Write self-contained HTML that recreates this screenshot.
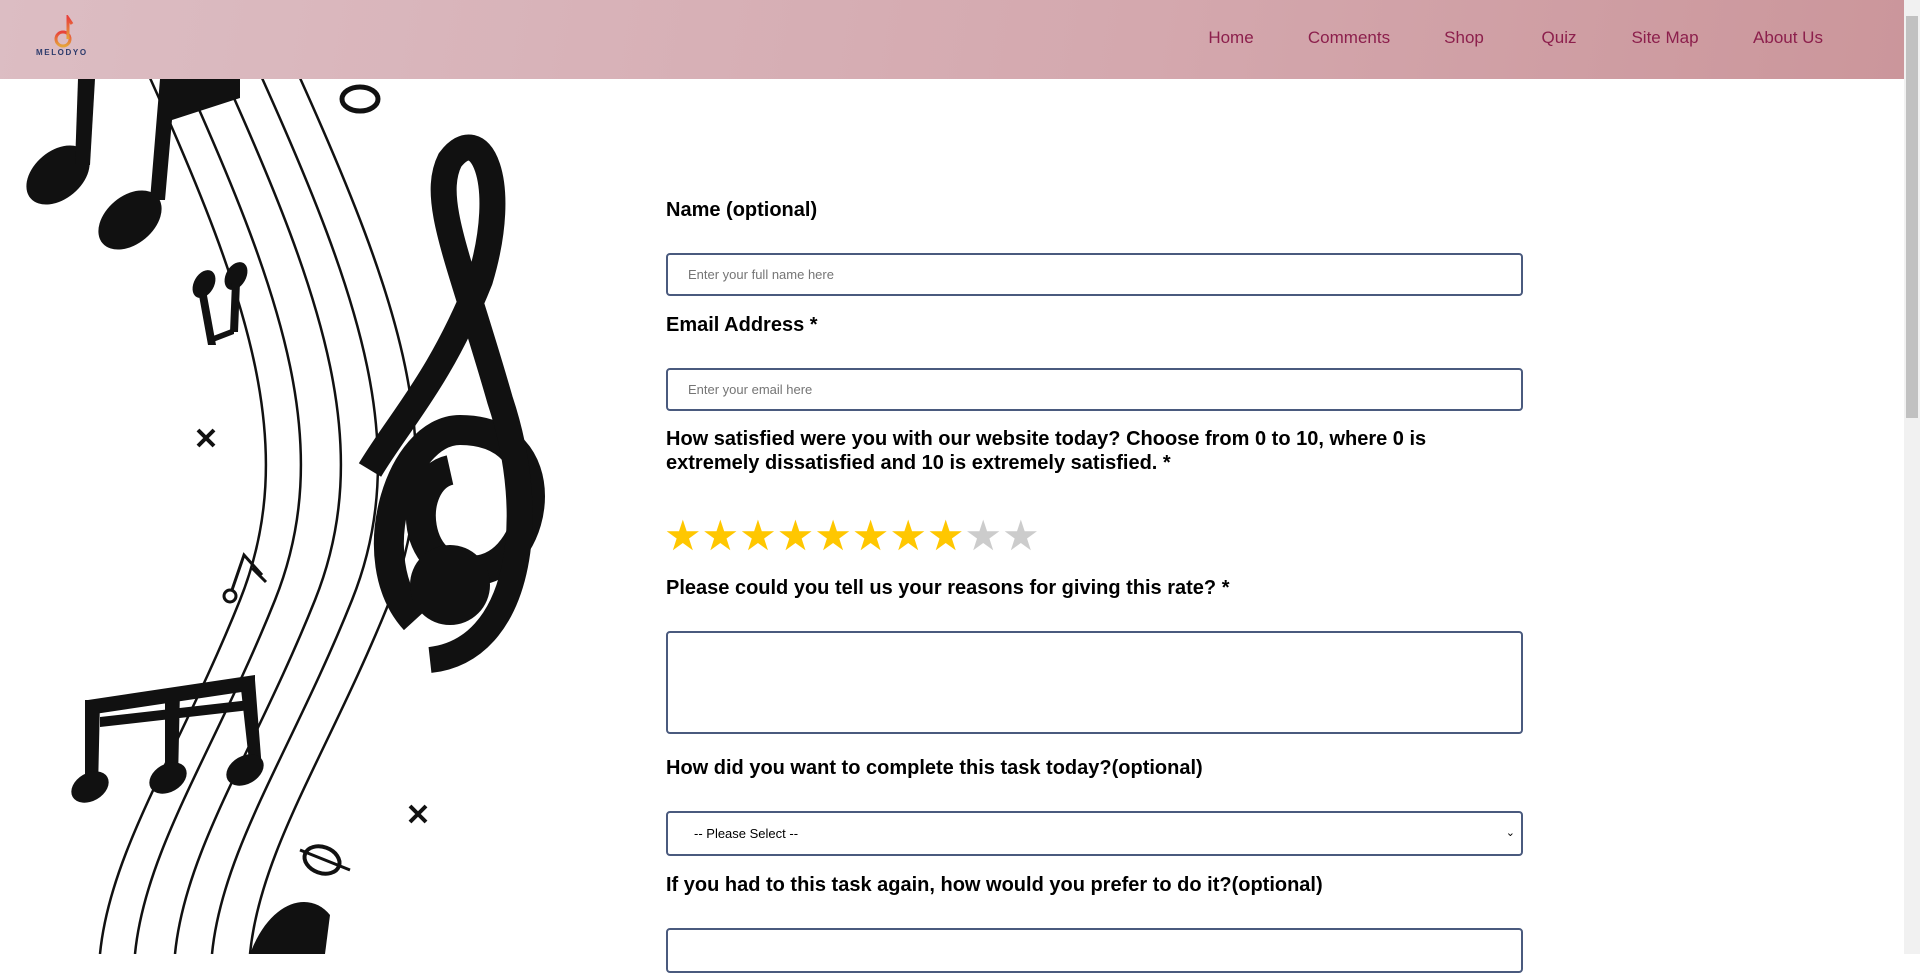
<!DOCTYPE html>
<html><head><meta charset="utf-8"><style>
*{box-sizing:border-box}
html,body{margin:0;padding:0;width:1920px;height:954px;overflow:hidden;background:#fff;font-family:"Liberation Sans",Arial,sans-serif}
header{position:absolute;left:0;top:0;width:1904px;height:79px;background:linear-gradient(100deg,#dcbdc3 0%,#d4a8ae 60%,#cb969b 100%)}
nav a{position:absolute;top:28px;font-size:17px;color:#8c1f4c;text-decoration:none;transform:translateX(-50%)}
.logo{position:absolute;left:36px;top:15px}
.sb{position:absolute;right:0;top:0;width:16px;height:954px;background:#f1f1f1}
.sb div{position:absolute;left:2px;top:16px;width:12px;height:402px;background:#c1c1c1}
label{position:absolute;left:666px;font-weight:bold;font-size:20px;color:#000;line-height:24px}
.in{position:absolute;left:666px;width:857px;border:2px solid #4a5a7e;border-radius:4px;background:#fff;font-size:13px;color:#757575;padding-left:20px}
.stars{position:absolute;left:664px;top:514px;font-size:42px;letter-spacing:-0.1px;line-height:44px;font-family:"DejaVu Sans",sans-serif}
</style></head><body>
<svg width="620" height="954" style="position:absolute;left:0;top:0" viewBox="0 0 620 954">
<g fill="none" stroke="#111" stroke-width="2.5">
<path d="M150 78 C250 300 300 450 240 600 S110 850 100 954"/>
<path d="M185 78 C285 300 335 450 275 600 S145 850 135 954"/>
<path d="M225 78 C325 300 375 450 315 600 S185 850 175 954"/>
<path d="M262 78 C362 300 412 450 352 600 S222 850 212 954"/>
<path d="M300 78 C400 300 450 450 390 600 S260 850 250 954"/>
</g>
<g fill="#111">
<ellipse cx="58" cy="175" rx="36" ry="24" transform="rotate(-40 58 175)"/>
<ellipse cx="130" cy="220" rx="36" ry="24" transform="rotate(-40 130 220)"/>
<path d="M78 79 L95 79 L90 165 L75 165Z"/>
<path d="M160 79 L240 79 L240 98 L172 120 L165 200 L150 200 Z"/>
<ellipse cx="204" cy="284" rx="10" ry="15" transform="rotate(30 204 284)"/>
<ellipse cx="236" cy="276" rx="10" ry="15" transform="rotate(30 236 276)"/>
<path d="M198 290 h8 l10 55 h-8Z M232 282 h8 l-2 50 h-8Z M208 338 l26 -10 v6 l-26 10Z"/>
<path d="M85 700 L100 700 L98 790 L85 790Z M165 690 L180 690 L178 780 L165 780Z M240 680 L255 680 L262 770 L250 770Z M88 700 L255 675 L255 690 L88 715Z M100 717 L250 700 L250 710 L100 727Z"/>
<ellipse cx="90" cy="787" rx="20" ry="14" transform="rotate(-30 90 787)"/>
<ellipse cx="168" cy="778" rx="20" ry="14" transform="rotate(-30 168 778)"/>
<ellipse cx="245" cy="770" rx="20" ry="14" transform="rotate(-30 245 770)"/>
<path d="M250 954 C270 900 310 890 330 915 L325 954Z"/>
</g>
<g fill="none" stroke="#111">
<ellipse cx="360" cy="99" rx="18" ry="12" stroke-width="5"/>
<path d="M415 620 C360 560 400 430 460 430 C560 430 540 560 480 570 C410 580 405 480 450 470" stroke-width="30"/>
<path d="M430 660 C520 650 540 520 500 400 C460 260 430 200 450 160 C480 120 510 180 480 280 C440 380 400 420 370 470" stroke-width="26"/>
<circle cx="450" cy="585" r="40" fill="#111" stroke="none"/>
<path d="M198 430 l16 16 M214 430 l-16 16 M410 806 l16 16 M426 806 l-16 16" stroke-width="4"/>
<ellipse cx="322" cy="860" rx="18" ry="13" stroke-width="4" transform="rotate(20 322 860)"/>
<path d="M300 850 l50 20" stroke-width="3"/>
<path d="M232 590 l12 -35 l18 20 M252 568 l14 14" stroke-width="3"/>
<circle cx="230" cy="596" r="6" stroke-width="3"/>
</g>
</svg>
<header>
<div class="logo"><svg width="60" height="40" viewBox="0 0 60 40"><defs><linearGradient id="g" x1="0" y1="1" x2="0" y2="0"><stop offset="0" stop-color="#e6a33a"/><stop offset="1" stop-color="#e8423a"/></linearGradient></defs><circle cx="27" cy="24" r="7" fill="none" stroke="url(#g)" stroke-width="3"/><path d="M32 24 V3 l4 6" fill="none" stroke="url(#g)" stroke-width="3"/></svg>
<div style="position:absolute;left:0;top:33px;font-size:8px;font-weight:bold;letter-spacing:1.6px;color:#2b3a6b">MELODYO</div></div>
<nav><a style="left:1231px">Home</a><a style="left:1349px">Comments</a><a style="left:1464px">Shop</a><a style="left:1559px">Quiz</a><a style="left:1665px">Site Map</a><a style="left:1788px">About Us</a></nav>
</header>
<div class="sb"><div></div></div>
<label style="top:198px">Name (optional)</label>
<div class="in" style="top:253px;height:43px;line-height:39px">Enter your full name here</div>
<label style="top:313px">Email Address *</label>
<div class="in" style="top:368px;height:43px;line-height:39px">Enter your email here</div>
<label style="top:427px;width:790px">How satisfied were you with our website today? Choose from 0 to 10, where 0 is extremely dissatisfied and 10 is extremely satisfied. *</label>
<div class="stars"><span style="color:#ffc700">★★★★★★★★</span><span style="color:#ccc">★★</span></div>
<label style="top:576px">Please could you tell us your reasons for giving this rate? *</label>
<div class="in" style="top:631px;height:103px"></div>
<label style="top:756px">How did you want to complete this task today?(optional)</label>
<div class="in" style="top:811px;height:45px;line-height:41px;color:#000;font-size:13px;padding-left:26px">-- Please Select --<span style="position:absolute;right:6px;font-size:11px">&#8964;</span></div>
<label style="top:873px">If you had to this task again, how would you prefer to do it?(optional)</label>
<div class="in" style="top:928px;height:45px"></div>
</body></html>
